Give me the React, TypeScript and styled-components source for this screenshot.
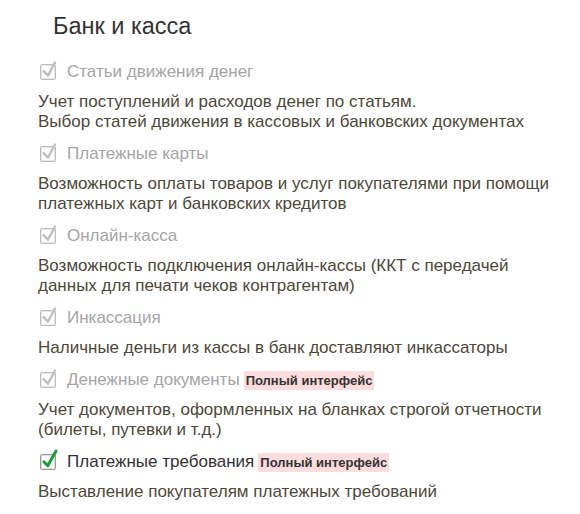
import React from "react";
import styled, { createGlobalStyle } from "styled-components";

const Global = createGlobalStyle`
  html, body { margin: 0; padding: 0; background: #fff; }
  body { font-family: "Liberation Sans", Arial, sans-serif; }
`;

const Page = styled.div`
  width: 580px;
  height: 514px;
  box-sizing: border-box;
  padding: 10px 0 0 38px;
  background: #fff;
  overflow: hidden;
`;

const Title = styled.h1`
  margin: 0 0 0 15px;
  font-weight: normal;
  font-size: 23.5px;
  line-height: 32px;
  color: #333;
`;

const List = styled.div`
  display: flex;
  flex-direction: column;
  margin-top: 19px;
`;

const Item = styled.div`
  display: flex;
  flex-direction: column;
  margin-bottom: 11px;
`;

const Row = styled.label`
  display: flex;
  align-items: center;
  height: 22px;
  gap: 11px;
  padding-left: 2px;
`;

const Box = styled.span<{ $active: boolean }>`
  display: block;
  width: 16px;
  height: 16px;
  box-sizing: border-box;
  border: 1px solid ${(p) => (p.$active ? "#999999" : "#bdbdbd")};
  box-shadow: inset 0 0 0 1px ${(p) => (p.$active ? "#dedede" : "#e6e6e6")};
  border-radius: 2px;
  background: #fff;
  position: relative;
  flex: none;
  svg { position: absolute; left: -1px; top: -1px; overflow: visible; }
`;

const Label = styled.span<{ $active: boolean }>`
  font-size: 17px;
  color: ${(p) => (p.$active ? "#333" : "#a5a5a5")};
`;

const Badge = styled.span`
  font-size: 13px;
  font-weight: bold;
  color: #333;
  background: #fcdcdc;
  padding: 2px 2px 2px;
  margin-left: -7px;
`;

const Desc = styled.div`
  margin-top: 9px;
  font-size: 17px;
  line-height: 20px;
  color: #4d4838;
`;

type Entry = { label: string; desc: string[]; active?: boolean; badge?: boolean };

const entries: Entry[] = [
  {
    label: "Статьи движения денег",
    desc: [
      "Учет поступлений и расходов денег по статьям.",
      "Выбор статей движения в кассовых и банковских документах",
    ],
  },
  {
    label: "Платежные карты",
    desc: [
      "Возможность оплаты товаров и услуг покупателями при помощи",
      "платежных карт и банковских кредитов",
    ],
  },
  {
    label: "Онлайн-касса",
    desc: [
      "Возможность подключения онлайн-кассы (ККТ с передачей",
      "данных для печати чеков контрагентам)",
    ],
  },
  {
    label: "Инкассация",
    desc: ["Наличные деньги из кассы в банк доставляют инкассаторы"],
  },
  {
    label: "Денежные документы",
    badge: true,
    desc: [
      "Учет документов, оформленных на бланках строгой отчетности",
      "(билеты, путевки и т.д.)",
    ],
  },
  {
    label: "Платежные требования",
    badge: true,
    active: true,
    desc: ["Выставление покупателям платежных требований"],
  },
];

const Check = ({ active }: { active: boolean }) => (
  <svg width="16" height="16" viewBox="0 0 16 16">
    {active ? (
      <path
        d="M3.8 7.8 L7.8 11.8 L16 -3"
        fill="none"
        stroke="#1b9c3a"
        strokeWidth={3}
        strokeLinecap="round"
        strokeLinejoin="round"
      />
    ) : (
      <path
        d="M3.6 7.2 L8 11.6 L15 -1.5"
        fill="none"
        stroke="#c0c0c0"
        strokeWidth={2.5}
        strokeLinecap="round"
        strokeLinejoin="round"
      />
    )}
  </svg>
);

export default function App() {
  return (
    <>
      <Global />
      <Page>
        <Title>Банк и касса</Title>
        <List>
          {entries.map((e) => (
            <Item key={e.label}>
              <Row>
                <Box $active={!!e.active}>
                  <Check active={!!e.active} />
                </Box>
                <Label $active={!!e.active}>{e.label}</Label>
                {e.badge && <Badge>Полный интерфейс</Badge>}
              </Row>
              <Desc>
                {e.desc.map((d) => (
                  <div key={d}>{d}</div>
                ))}
              </Desc>
            </Item>
          ))}
        </List>
      </Page>
    </>
  );
}
